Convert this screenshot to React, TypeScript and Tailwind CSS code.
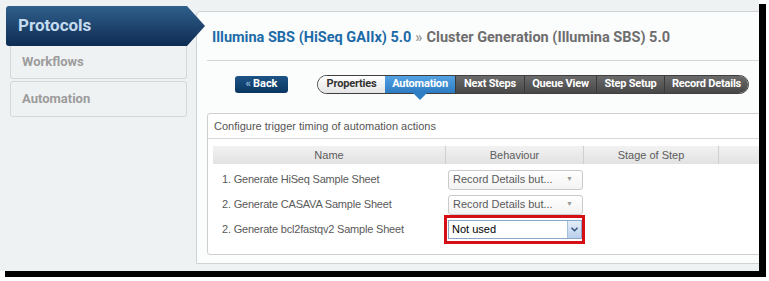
const din = "font-['Roboto',sans-serif]"

const tabs = [
  { label: "Properties", w: "w-[67px]" },
  { label: "Automation", w: "w-[70px]" },
  { label: "Next Steps", w: "w-[69px]" },
  { label: "Queue View", w: "w-[72px]" },
  { label: "Step Setup", w: "w-[68px]" },
  { label: "Record Details", w: "w-[84px]" },
]

const rows = [
  { name: "1. Generate HiSeq Sample Sheet", value: "Record Details but..." },
  { name: "2. Generate CASAVA Sample Sheet", value: "Record Details but..." },
  { name: "2. Generate bcl2fastqv2 Sample Sheet", value: "Not used", active: true },
]

const Sidebar = () => (
  <aside className={`relative z-10 flex w-[196px] shrink-0 flex-col pt-[6px] pl-[6px] ${din}`}>
    <div className="flex h-[40px] w-[199px] items-center rounded-l-[3px] bg-gradient-to-b from-[#30608c] to-[#0e2c52] pl-[12px] text-[17px] font-bold text-[#c4dbf0] [clip-path:polygon(0_0,181px_0,199px_50%,181px_100%,0_100%)]">
      Protocols
    </div>
    <div className="ml-[4px] flex h-[33px] w-[177px] items-center rounded-b-[3px] border border-t-0 border-[#d3d7d9] pl-[11px] text-[13px] font-bold text-[#9c9c9c]">
      Workflows
    </div>
    <div className="mt-[2px] ml-[4px] flex h-[36px] w-[177px] items-center rounded-[3px] border border-[#d3d7d9] pl-[11px] text-[13px] font-bold text-[#9c9c9c]">
      Automation
    </div>
  </aside>
)

const TabBar = () => (
  <div className="relative ml-[29px] flex h-[19px] rounded-full border border-[#3f3f3f] text-[11px] font-bold tracking-[-0.2px] whitespace-nowrap">
    {tabs.map((tab, i) => {
      const active = tab.label === "Automation"
      const first = i === 0
      const last = i === tabs.length - 1
      return (
        <div
          key={tab.label}
          className={`relative flex items-center justify-center ${tab.w} ${
            first
              ? "rounded-l-full bg-gradient-to-b from-white to-[#e4e4e4] text-[#333]"
              : active
                ? "bg-gradient-to-b from-[#53a2e4] to-[#2c7bc2] text-white"
                : "border-l border-[#3a3a3a] bg-gradient-to-b from-[#6b6b6b] to-[#474747] text-white"
          } ${last ? "rounded-r-full" : ""}`}
        >
          {tab.label}
          {active && (
            <span className="absolute top-full left-1/2 -translate-x-1/2 border-x-[7px] border-t-[7px] border-x-transparent border-t-[#2f7fc5]" />
          )}
        </div>
      )
    })}
  </div>
)

const Select = ({ value, active }: { value: string; active?: boolean }) =>
  active ? (
    <div className="relative ml-[2px] flex h-[19px] w-[134px]">
      <div className="flex flex-1 items-center border border-[#8aa6c9] bg-white pl-[3px] text-[11px] text-black">
        {value}
        <div className="ml-auto flex h-full w-[14px] items-center justify-center border-l border-[#a6bfdc] bg-gradient-to-b from-[#e4eefa] to-[#b9cfea]">
          <svg width="7" height="5" viewBox="0 0 7 5">
            <path d="M0.5 0.8 L3.5 3.8 L6.5 0.8" fill="none" stroke="#2e4d76" strokeWidth="1.4" />
          </svg>
        </div>
      </div>
      <div className="absolute -top-[5px] -right-[3px] -bottom-[5px] -left-[4px] border-[3px] border-[#d40f16]" />
    </div>
  ) : (
    <div className="ml-[2px] flex h-[20px] w-[135px] items-center rounded-[3px] border border-[#cacaca] bg-gradient-to-b from-white to-[#f3f3f3] pl-[4px] text-[11px] text-[#5a5a5a]">
      {value}
      <span className="mr-[9px] ml-auto text-[7px] text-[#9a9a9a]">▼</span>
    </div>
  )

const App = () => (
  <div className="h-[281px] w-[769px] bg-white">
    <div className="flex h-[271px] w-[759px] overflow-hidden bg-[#eff2f3] shadow-[6px_5px_0_1px_#000]">
      <Sidebar />
      <main className="mt-[11px] h-[253px] w-[620px] shrink-0 rounded-tl-[4px] border border-[#cfd3d5] bg-[#fbfcfc]">
        <div className={`mx-[10px] flex h-[49px] items-center border-b border-[#d3d6d8] pt-[3px] pl-[5px] text-[14.5px] font-bold whitespace-nowrap ${din}`}>
          <span className="text-[#1c6ba8]">Illumina SBS (HiSeq GAIIx) 5.0</span>
          <span className="mx-[4px] text-[#9a9a9a]">»</span>
          <span className="text-[#6e6e6e]">Cluster Generation (Illumina SBS) 5.0</span>
        </div>
        <div className={`mx-[10px] flex h-[52px] items-start pt-[14px] ${din}`}>
          <div className="mt-[1px] ml-[28px] flex h-[17px] w-[53px] items-center justify-center rounded-[3px] bg-gradient-to-b from-[#1d5486] to-[#0a3660] text-[11px] font-bold text-white">
            <span className="mr-[2px] text-[#8fb5da]">«</span>Back
          </div>
          <TabBar />
        </div>
        <section className="mx-[10px] h-[142px] rounded-[3px] border border-[#cdd0d2] bg-white font-['Liberation_Sans',Arial,sans-serif] text-[#555]">
          <div className="flex h-[25px] items-center border-b border-[#d6d6d6] pl-[6px] text-[11px]">
            Configure trigger timing of automation actions
          </div>
          <div className="px-[5px] pt-[7px]">
            <div className="grid h-[18px] grid-cols-[233px_138px_135px_1fr] bg-gradient-to-b from-[#f2f2f2] to-[#e2e2e2] text-[11px] text-[#5c5c5c]">
              <div className="flex items-center justify-center border-r border-[#cfcfcf]">Name</div>
              <div className="flex items-center justify-center border-r border-[#cfcfcf]">Behaviour</div>
              <div className="flex items-center justify-center border-r border-[#cfcfcf]">Stage of Step</div>
              <div />
            </div>
            <div className="pt-[3px]">
              {rows.map((row) => (
                <div key={row.name} className="grid h-[25px] grid-cols-[233px_1fr] items-center">
                  <div className="pl-[9px] text-[11px] tracking-[-0.2px] text-[#5a5a5a]">{row.name}</div>
                  <Select value={row.value} active={row.active} />
                </div>
              ))}
            </div>
          </div>
        </section>
      </main>
    </div>
  </div>
)

export default App
